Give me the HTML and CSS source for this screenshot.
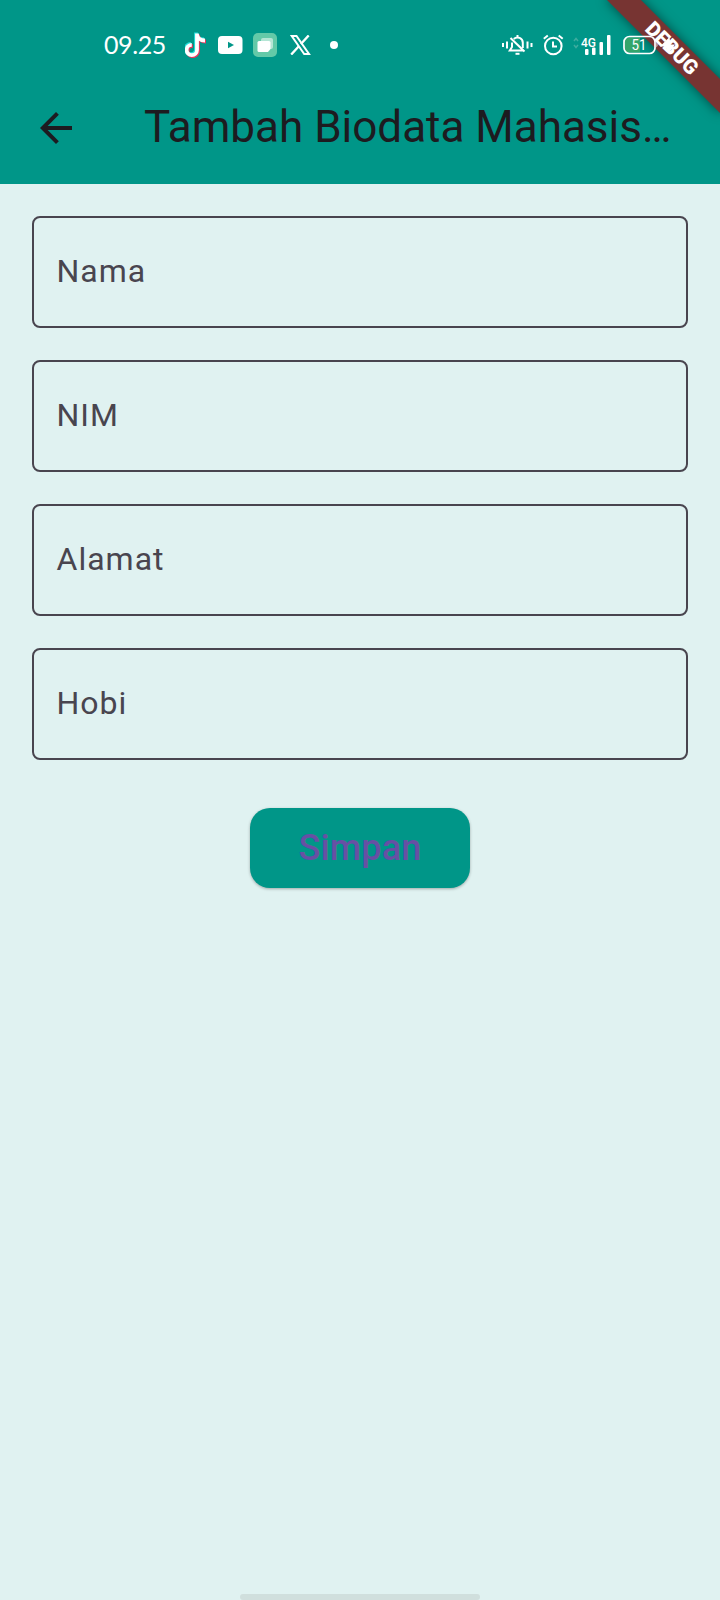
FILE: index.html
```
<!DOCTYPE html>
<html lang="id">
<head>
<meta charset="utf-8">
<title>Tambah Biodata Mahasiswa</title>
<link rel="stylesheet" href="styles.css">
</head>
<body>
<div class="screen">
  <header class="header">
    <div class="banner">DEBUG</div>
    <div class="status">
      <span class="clock">09.25</span>
      <svg class="tiktok" width="22" height="26" viewBox="0 0 22 26">
        <g fill="none" stroke-width="3.800">
          <path stroke="#25e0dc" d="M11 .5v16.500a5.200 5.200 0 1 1-5.200-5.200M11 1.500c.6 4 3 6 8 6"/>
          <path stroke="#e8365d" d="M13 2.500v16.500a5.200 5.200 0 1 1-5.200-5.200M13 3.500c.6 4 3 6 8 6"/>
          <path stroke="#fff" d="M12 1.500v16.500a5.200 5.200 0 1 1-5.200-5.200M12 2.500c.6 4 3 6 8 6"/>
        </g>
      </svg>
      <svg class="youtube" width="25" height="18" viewBox="0 0 25 18">
        <rect width="24.500" height="18" rx="4" fill="#fff"/>
        <path d="M10 5.800v6.400l6-3.200z" fill="#009688"/>
      </svg>
      <svg class="files" width="24" height="24" viewBox="0 0 24 24">
        <rect width="24" height="24" rx="5" fill="#63c9a8"/>
        <rect x="8" y="5" width="12" height="11" rx="2" fill="#b5e5d5"/>
        <path d="M6 8h10a1.500 1.500 0 0 1 1.500 1.500V16L15 19H6a1.500 1.500 0 0 1-1.500-1.500v-8A1.500 1.500 0 0 1 6 8z" fill="#fff"/>
      </svg>
      <svg class="x" width="21" height="20" viewBox="0 0 21 20" fill="none" stroke="#fff">
        <path stroke-width="2" d="M1.700 1h4.800l12.500 18h-4.800z"/>
        <path stroke-width="2.300" d="M18.700.4l-7.800 8.700M8.800 11.300l-7.600 8.300"/>
      </svg>
      <span class="dot"></span>
      <svg class="mute" width="31" height="22" viewBox="0 0 31 22" fill="none" stroke="#fff" stroke-width="2">
        <path d="M1 9v4M5 7.500v7M25.500 7.500v7M29.500 9v4"/>
        <path d="M11.800 5a5.300 5.300 0 0 1 9 4v5M10 8.500v4.500L7.800 16.500h13M8.500 4l14 13.500M15.500 1v2.500"/>
        <path d="M13.500 19.800h4"/>
      </svg>
      <svg class="alarm" width="20" height="22" viewBox="0 0 20 22" fill="none" stroke="#fff" stroke-width="2">
        <circle cx="10.300" cy="12" r="8.300"/>
        <path d="M10 7.500v5h4M.8 4.800l4-3.300M15.700 1.500l4 3.300"/>
      </svg>
      <svg class="signal" width="38" height="22" viewBox="0 0 38 22">
        <path d="M1 7l2-2.500L5 7M1 11l2 2.500L5 11" fill="none" stroke="#3dac9f" stroke-width="1.500"/>
        <g fill="#fff">
          <text class="net" x="8" y="12.500" textLength="15" lengthAdjust="spacingAndGlyphs">4G</text>
          <rect x="12" y="15" width="3.500" height="6" rx="1"/>
          <rect x="19" y="13.500" width="3.500" height="7.500" rx="1"/>
          <rect x="26.500" y="8" width="3.500" height="13" rx="1"/>
          <rect x="34" y="1" width="3.500" height="20" rx="1"/>
        </g>
      </svg>
      <svg class="battery" width="54" height="20" viewBox="0 0 54 20">
        <path d="M6 2.500h11v15H6a4 4 0 0 1-4-4v-7a4 4 0 0 1 4-4z" fill="#34a56b"/>
        <rect x="1" y="1.500" width="31" height="17" rx="5.500" fill="none" stroke="#fff" stroke-width="1.700"/>
        <path d="M33.500 7.500q2 2.500 0 5z" fill="#fff"/>
        <text class="level" x="8.500" y="15" textLength="15" lengthAdjust="spacingAndGlyphs" fill="#fff">51</text>
        <path d="M46.500 2L37 11.500h5L46 18l6-8.500h-4.500z" fill="#fff"/>
      </svg>
    </div>
    <div class="appbar">
      <svg class="back" width="32" height="32" viewBox="0 0 32 32"><path d="M32 14H7.660l11.180-11.180L16 0 0 16l16 16 2.820-2.820L7.660 18H32z" fill="#1d1b20"/></svg>
      <h1 class="title">Tambah Biodata Mahasis…</h1>
    </div>
  </header>
  <main class="form">
    <div class="field">Nama</div>
    <div class="field">NIM</div>
    <div class="field">Alamat</div>
    <div class="field">Hobi</div>
    <button class="save">Simpan</button>
  </main>
  <div class="handle"></div>
</div>
</body>
</html>
```
FILE: styles.css
```
* { box-sizing: border-box; }
body { margin: 0; font-family: Roboto, sans-serif; }
.screen {
  width: 720px;
  height: 1600px;
  display: flex;
  flex-direction: column;
  align-items: center;
  background: #e0f2f1;
  overflow: hidden;
}
.header {
  position: relative;
  width: 720px;
  height: 184px;
  flex: none;
  background: #009688;
  color: #1d1b20;
}
/* corner ribbon, sits below the status icons */
.banner {
  position: absolute;
  left: 592px;
  top: 36px;
  width: 160px;
  height: 24px;
  transform: rotate(45deg);
  background: #773432;
  box-shadow: 0 0 12px rgba(0, 0, 0, .5);
  color: #fff;
  font-size: 20.4px;
  font-weight: 900;
  line-height: 24px;
  text-align: center;
}
.status {
  position: relative;
  display: flex;
  align-items: center;
  height: 90px;
  padding-left: 104px;
}
.status > * { flex: none; }
.clock {
  width: 81px;
  padding-bottom: 2px;
  font: 25px/30px Lato, sans-serif;
  letter-spacing: -.4px;
  color: #fff;
}
.youtube { margin-left: 11px; }
.files { margin-left: 10px; }
.x { margin-left: 13px; }
.dot {
  width: 8px;
  height: 8px;
  margin-left: 19px;
  border-radius: 50%;
  background: #fff;
}
.mute { margin-left: 164px; }
.alarm { margin-left: 10px; overflow: visible; }
.signal { margin-left: 10px; }
.battery { margin-left: 12px; }
.net { font: 500 13px Roboto, sans-serif; }
.level { font: 14px Roboto, sans-serif; }
.appbar {
  display: flex;
  align-items: center;
  height: 76px;
  padding: 0 32px 0 40px;
}
.back { flex: none; margin-right: 72px; }
.title {
  margin: 0;
  padding-bottom: 2px;
  flex: 1;
  font-size: 44px;
  font-weight: 400;
  line-height: 56px;
  white-space: nowrap;
}
.form {
  flex: 1;
  width: 100%;
  display: flex;
  flex-direction: column;
  align-items: center;
  gap: 32px;
  padding: 32px 32px 0;
}
.field {
  width: 100%;
  height: 112px;
  padding: 0 22.5px;
  border: 2px solid #49454f;
  border-radius: 8px;
  color: #49454f;
  font-size: 32px;
  line-height: 106px;
  letter-spacing: 1px;
}
.save {
  width: 220px;
  height: 80px;
  margin-top: 16px;
  padding: 0;
  border: 0;
  border-radius: 20px;
  background: #009688;
  box-shadow: 0 1px 3px rgba(0, 0, 0, .3);
  color: #6750a4;
  font: 500 36px/80px Roboto, sans-serif;
  letter-spacing: .2px;
}
.handle {
  width: 240px;
  height: 6px;
  border-radius: 3px;
  background: #d0dfdd;
}
```
